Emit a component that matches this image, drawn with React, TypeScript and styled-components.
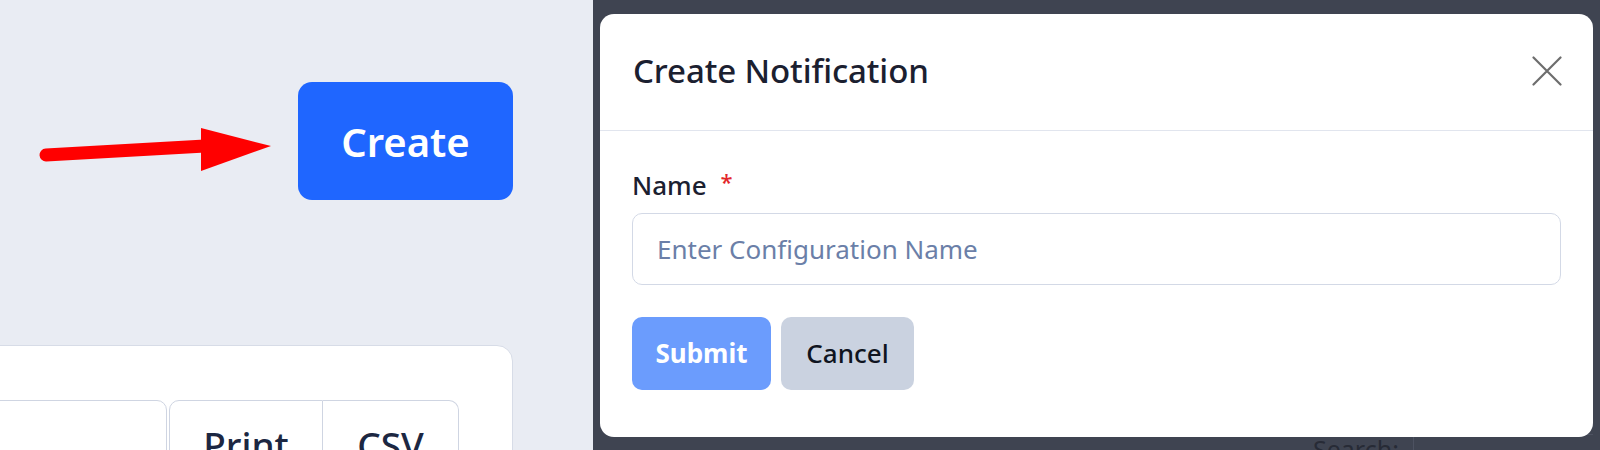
import React from "react";
import styled, { createGlobalStyle } from "styled-components";

const Global = createGlobalStyle`
  html, body { margin: 0; padding: 0; }
  body {
    width: 1600px;
    height: 450px;
    overflow: hidden;
    font-family: "Noto Sans", "Open Sans", sans-serif;
  }
  * { box-sizing: border-box; }
`;

const Page = styled.div`
  display: flex;
  width: 1600px;
  height: 450px;
`;

const LeftPane = styled.section`
  flex: none;
  width: 593px;
  height: 450px;
  background: #e9ecf3;
  display: flex;
  flex-direction: column;
  align-items: flex-end;
  padding: 82px 80px 0 0;
  overflow: hidden;
`;

const HeaderRow = styled.div`
  display: flex;
  align-items: flex-start;
  gap: 25px;
`;

const CreateButton = styled.button`
  width: 215px;
  height: 118px;
  border: none;
  border-radius: 14px;
  background: #1f66ff;
  color: #ffffff;
  font-family: "Noto Sans", sans-serif;
  font-size: 40px;
  font-weight: 600;
  cursor: pointer;
`;

const Card = styled.div`
  flex: none;
  width: 720px;
  height: 200px;
  margin-top: 145px;
  background: #ffffff;
  border: 1.5px solid #d7dce7;
  border-radius: 16px;
  padding: 54px 53px 0 0;
  display: flex;
  justify-content: flex-end;
  align-items: flex-start;
`;

const Toolbar = styled.div`
  display: flex;
  gap: 2px;
`;

const SearchBox = styled.div`
  width: 420px;
  height: 72px;
  border: 1.5px solid #cfd5e2;
  border-radius: 10px;
`;

const BtnGroup = styled.div`
  display: flex;
`;

const GroupButton = styled.button<{ $w: number; $pos: "first" | "last" }>`
  width: ${(p) => p.$w}px;
  height: 72px;
  background: #ffffff;
  border: 1.5px solid #cfd5e2;
  border-left-width: ${(p) => (p.$pos === "last" ? "0" : "1.5px")};
  border-radius: ${(p) => (p.$pos === "first" ? "10px 0 0 10px" : "0 10px 10px 0")};
  font-family: "Noto Sans", sans-serif;
  font-size: 37px;
  font-weight: 500;
  color: #1c2742;
  padding: 19px 0 0 0;
  display: flex;
  justify-content: center;
  align-items: flex-start;
  line-height: 1.36;
`;

const RightPane = styled.section`
  flex: 1;
  position: relative;
  height: 450px;
  background: #3f4451;
  overflow: hidden;
`;

const BackdropContent = styled.div`
  display: flex;
  align-items: flex-start;
  gap: 14px;
  padding: 434px 0 0 720px;
`;

const SearchLabel = styled.span`
  font-size: 25px;
  line-height: 30px;
  color: #272b36;
`;

const SearchField = styled.div`
  width: 180px;
  height: 40px;
  border-left: 1.5px solid #4d5261;
  border-top: 1.5px solid #4d5261;
`;

const Overlay = styled.div`
  position: absolute;
  inset: 0;
  padding: 14px 7px 13px 7px;
  display: flex;
`;

const Modal = styled.div`
  flex: 1;
  background: #ffffff;
  border-radius: 14px;
  display: flex;
  flex-direction: column;
  overflow: hidden;
`;

const ModalHeader = styled.header`
  height: 116.5px;
  flex: none;
  border-bottom: 1.5px solid #e1e5ee;
  display: flex;
  align-items: center;
  justify-content: space-between;
  padding: 0 31px 2px 33px;
`;

const Title = styled.h2`
  margin: 0;
  font-size: 33px;
  font-weight: 500;
  color: #1b2030;
  letter-spacing: -0.1px;
`;

const CloseButton = styled.button`
  border: none;
  background: transparent;
  padding: 0;
  width: 30px;
  height: 30px;
  display: flex;
  align-items: center;
  justify-content: center;
  cursor: pointer;
`;

const ModalBody = styled.div`
  padding: 35px 32px 0 32px;
  display: flex;
  flex-direction: column;
`;

const Label = styled.label`
  font-size: 26px;
  font-weight: 500;
  line-height: 39px;
  color: #1b2030;
  display: flex;
  align-items: flex-start;
`;

const Required = styled.span`
  color: #e3262a;
  font-size: 22px;
  line-height: 30px;
  margin-left: 14px;
`;

const TextInput = styled.input`
  margin-top: 8px;
  height: 72px;
  width: 100%;
  border: 1.5px solid #d3d9e6;
  border-radius: 10px;
  padding: 0 24px;
  font-family: "Noto Sans", sans-serif;
  font-size: 26px;
  color: #1b2030;
  outline: none;
  &::placeholder {
    color: #6b7fa8;
  }
`;

const Actions = styled.div`
  margin-top: 32px;
  display: flex;
  gap: 10px;
`;

const ActionButton = styled.button<{ $variant: "primary" | "secondary"; $w: number }>`
  width: ${(p) => p.$w}px;
  height: 73px;
  border: none;
  border-radius: 10px;
  font-family: "Noto Sans", sans-serif;
  font-size: 26px;
  font-weight: ${(p) => (p.$variant === "primary" ? 700 : 500)};
  background: ${(p) => (p.$variant === "primary" ? "#6b9cfd" : "#cad2e0")};
  color: ${(p) => (p.$variant === "primary" ? "#ffffff" : "#0f1420")};
  cursor: pointer;
`;

const Arrow = () => (
  <svg width="234" height="118" viewBox="0 0 234 118" aria-hidden="true">
    <line x1="7" y1="73" x2="166" y2="64" stroke="#ff0000" strokeWidth="13" strokeLinecap="round" />
    <polygon points="162,46 162,89 232,64" fill="#ff0000" />
  </svg>
);

const CloseIcon = () => (
  <svg width="30" height="30" viewBox="0 0 30 30" aria-hidden="true">
    <path d="M1.5 1.5 L28.5 28.5 M28.5 1.5 L1.5 28.5" stroke="#6d6d6d" strokeWidth="2.2" strokeLinecap="round" />
  </svg>
);

export default function App() {
  return (
    <>
      <Global />
      <Page>
        <LeftPane>
          <HeaderRow>
            <Arrow />
            <CreateButton>Create</CreateButton>
          </HeaderRow>
          <Card>
            <Toolbar>
              <SearchBox />
              <BtnGroup>
                <GroupButton $w={154} $pos="first">Print</GroupButton>
                <GroupButton $w={136} $pos="last">CSV</GroupButton>
              </BtnGroup>
            </Toolbar>
          </Card>
        </LeftPane>
        <RightPane>
          <BackdropContent>
            <SearchLabel>Search:</SearchLabel>
            <SearchField />
          </BackdropContent>
          <Overlay>
            <Modal>
              <ModalHeader>
                <Title>Create Notification</Title>
                <CloseButton aria-label="Close">
                  <CloseIcon />
                </CloseButton>
              </ModalHeader>
              <ModalBody>
                <Label>
                  Name<Required>*</Required>
                </Label>
                <TextInput placeholder="Enter Configuration Name" />
                <Actions>
                  <ActionButton $variant="primary" $w={139}>Submit</ActionButton>
                  <ActionButton $variant="secondary" $w={133}>Cancel</ActionButton>
                </Actions>
              </ModalBody>
            </Modal>
          </Overlay>
        </RightPane>
      </Page>
    </>
  );
}
